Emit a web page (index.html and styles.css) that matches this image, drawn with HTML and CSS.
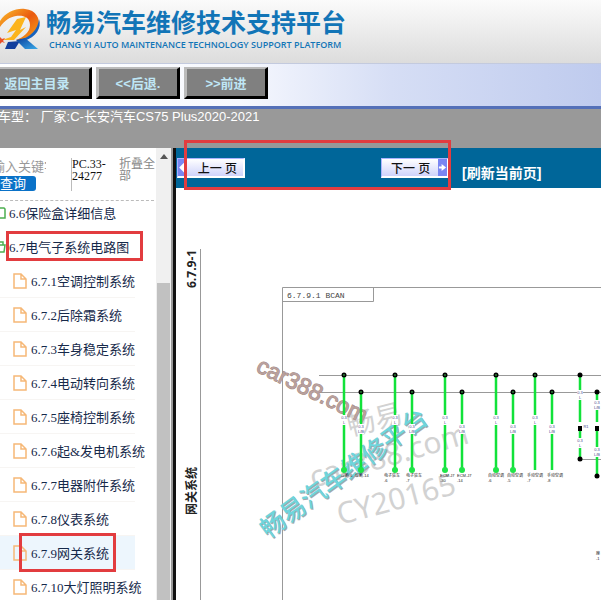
FILE: index.html
```html
<!DOCTYPE html>
<html lang="zh-CN">
<head>
<meta charset="utf-8">
<title>畅易汽车维修技术支持平台</title>
<link rel="stylesheet" href="styles.css">
</head>
<body>
<header class="brand">
  <svg class="logo" viewBox="0 0 42 52" aria-hidden="true">
    <defs>
      <linearGradient id="flame" x1="0" y1="0" x2="1" y2="1">
        <stop offset="0" stop-color="#fbc02a"/><stop offset=".5" stop-color="#ea5a10"/><stop offset="1" stop-color="#f7a81a"/>
      </linearGradient>
      <linearGradient id="leg" x1="0" y1="0" x2="1" y2="1">
        <stop offset="0" stop-color="#0b3f9c"/><stop offset="1" stop-color="#39a9e8"/>
      </linearGradient>
    </defs>
    <path d="M0 21C6 12 16 8 25 9c11 1 16 10 13 18-3 8-10 12-17 14l-5-1c8-3 14-8 14-15 0-8-7-10-14-9C10 17 5 20 0 27z" fill="url(#flame)"/>
    <path d="M39 19c3 9-3 18-15 22l-4-1c10-3 18-10 19-21z" fill="#1762bd"/>
    <path d="M17 19l9-2-6 13 6-3-12 13-12 0 9-3 5-7-9 3z" fill="#fcb41c"/>
    <path d="M8 42l12-1-5 8H5z" fill="#123f9d"/>
    <path d="M16 40l9-2 13 11H25z" fill="url(#leg)"/>
    <path d="M0 37l2 2 3-1-2 3 2 2-3-1-2 2z" fill="#e9502a"/>
  </svg>
  <div>
    <h1 class="brand-name">畅易汽车维修技术支持平台</h1>
    <p class="brand-sub">CHANG YI AUTO MAINTENANCE TECHNOLOGY SUPPORT PLATFORM</p>
  </div>
</header>
<nav class="toolbar">
  <button class="tool tool-home" type="button">返回主目录</button>
  <button class="tool" type="button">&lt;&lt;后退.</button>
  <button class="tool" type="button">&gt;&gt;前进</button>
</nav>
<div class="vehicle">车型： 厂家:C-长安汽车CS75 Plus2020-2021</div>
<div class="frames">
  <aside class="side">
    <div class="side-body">
      <form class="search">
        <div class="search-box">
          <input class="search-input" type="text" placeholder="输入关键字" aria-label="关键字">
          <button class="search-go" type="button">查询</button>
        </div>
        <span class="code">PC.33-24277</span>
        <a class="fold" href="#">折叠全部</a>
      </form>
      <ul class="tree">
        <li><a class="row chapter" href="#"><svg class="book" viewBox="0 0 6 12" aria-hidden="true"><path d="M0 1h4l1 1v9H0"/></svg>6.6保险盒详细信息</a></li>
        <li><a class="row chapter" href="#"><svg class="book" viewBox="0 0 6 12" aria-hidden="true"><path d="M0 1h3v3h2l-1 7H0M0 4h3"/></svg>6.7电气子系统电路图</a><span class="mark mark-chapter"></span></li>
        <li><a class="row" href="#"><svg class="page" viewBox="0 0 14 16" aria-hidden="true"><path d="M1 1h7l5 5v9H1zM8 1v5h5"/></svg>6.7.1空调控制系统</a></li>
        <li><a class="row" href="#"><svg class="page" viewBox="0 0 14 16" aria-hidden="true"><path d="M1 1h7l5 5v9H1zM8 1v5h5"/></svg>6.7.2后除霜系统</a></li>
        <li><a class="row" href="#"><svg class="page" viewBox="0 0 14 16" aria-hidden="true"><path d="M1 1h7l5 5v9H1zM8 1v5h5"/></svg>6.7.3车身稳定系统</a></li>
        <li><a class="row" href="#"><svg class="page" viewBox="0 0 14 16" aria-hidden="true"><path d="M1 1h7l5 5v9H1zM8 1v5h5"/></svg>6.7.4电动转向系统</a></li>
        <li><a class="row" href="#"><svg class="page" viewBox="0 0 14 16" aria-hidden="true"><path d="M1 1h7l5 5v9H1zM8 1v5h5"/></svg>6.7.5座椅控制系统</a></li>
        <li><a class="row" href="#"><svg class="page" viewBox="0 0 14 16" aria-hidden="true"><path d="M1 1h7l5 5v9H1zM8 1v5h5"/></svg>6.7.6起&amp;发电机系统</a></li>
        <li><a class="row" href="#"><svg class="page" viewBox="0 0 14 16" aria-hidden="true"><path d="M1 1h7l5 5v9H1zM8 1v5h5"/></svg>6.7.7电器附件系统</a></li>
        <li><a class="row" href="#"><svg class="page" viewBox="0 0 14 16" aria-hidden="true"><path d="M1 1h7l5 5v9H1zM8 1v5h5"/></svg>6.7.8仪表系统</a></li>
        <li><a class="row current" href="#"><svg class="page" viewBox="0 0 14 16" aria-hidden="true"><path d="M1 1h7l5 5v9H1zM8 1v5h5"/></svg>6.7.9网关系统</a><span class="mark mark-page"></span></li>
        <li><a class="row" href="#"><svg class="page" viewBox="0 0 14 16" aria-hidden="true"><path d="M1 1h7l5 5v9H1zM8 1v5h5"/></svg>6.7.10大灯照明系统</a></li>
      </ul>
    </div>
    <div class="scroll" aria-hidden="true"><i class="scroll-up"></i><i class="scroll-thumb"></i></div>
  </aside>
  <main class="view">
    <div class="pager">
      <button class="turn turn-prev" type="button"><svg class="arrow" viewBox="0 0 8 14" aria-hidden="true"><path d="M6 2v10L1 7z"/></svg><span>上一 页</span></button>
      <button class="turn turn-next" type="button"><span>下一 页</span><svg class="arrow" viewBox="0 0 10 14" aria-hidden="true"><path d="M1 6h3V3l5 4-5 4V8H1z"/></svg></button>
      <a class="refresh" href="#">[刷新当前页]</a>
      <span class="mark mark-pager"></span>
    </div>
    <svg class="sheet" viewBox="176 188 425 412" role="img" aria-label="6.7.9.1 BCAN">
      <defs>
        <g id="w1"><path class="wire" d="M0 375V470"/><circle cy="375" r="2.5"/><circle cy="375" r="1" class="eye"/><path class="gap" d="M-3 415h6v10h-6z"/></g>
        <g id="w2"><path class="wire" d="M0 392V470"/><circle cy="392" r="2.5"/><circle cy="392" r="1" class="eye"/><path class="gap" d="M-3 424h6v10h-6z"/></g>
      </defs>
      <path class="rule" d="M200.500 249V600M282.500 600V287.500H601M282.500 301.500H373.500V287.500"/>
      <text class="side-text" transform="translate(196 288) rotate(-90)">6.7.9-1</text>
      <text class="side-text" transform="translate(196 515) rotate(-90)">网关系统</text>
      <text class="frame-title" x="287" y="298">6.7.9.1 BCAN</text>
      <path class="rule" d="M319 375.500H601M319 392.500H601M580 459.500H601"/>
      <g class="grey">
        <text font-size="28" transform="translate(350 436) rotate(-14)">畅易</text>
        <text font-size="30" transform="translate(313 488) rotate(-16)">car388.com</text>
        <text font-size="30" transform="translate(340 525) rotate(-15)">CY20165</text>
      </g>
      <text class="brown" transform="translate(255 371) rotate(26)">car388.com</text>
      <text class="cyan shade" transform="translate(269 540) rotate(-36)">畅易汽车维修平台</text>
      <text class="cyan" transform="translate(268 539) rotate(-36)">畅易汽车维修平台</text>
      <use href="#w1" x="344"/><use href="#w1" x="395"/><use href="#w1" x="445"/><use href="#w1" x="496"/><use href="#w1" x="535"/>
      <use href="#w2" x="361"/><use href="#w2" x="412"/><use href="#w2" x="462"/><use href="#w2" x="513"/><use href="#w2" x="552"/>
      <g class="plug"><circle cx="344" cy="470" r="3"/><circle cx="361" cy="470" r="3"/><circle cx="395" cy="470" r="3"/><circle cx="412" cy="470" r="3"/><circle cx="445" cy="470" r="3"/><circle cx="462" cy="470" r="3"/><circle cx="496" cy="470" r="3"/><circle cx="513" cy="470" r="3"/></g>
      <path class="wire" d="M580 375V459M597 392V476"/>
      <circle cx="580" cy="375" r="2.500"/><circle cx="597" cy="392" r="2.500"/><circle cx="580" cy="459" r="2.500"/><circle cx="597" cy="476" r="2.500"/>
      <path class="gap" d="M577 390h6v10h-6zM577 438h6v10h-6zM594 400h6v10h-6zM594 447h6v10h-6zM577 422h6v4h-6zM594 422h6v4h-6z"/>
      <path d="M578 426h4v5h-4zM595 426h4v5h-4z"/>
      <g class="tag">
        <text x="344" y="419">0.3</text><text x="344" y="424">L</text><text x="361" y="428">0.3</text><text x="361" y="433">L/B</text>
        <text x="395" y="419">0.3</text><text x="395" y="424">L</text><text x="412" y="428">0.3</text><text x="412" y="433">L/B</text>
        <text x="445" y="419">0.3</text><text x="445" y="424">L</text><text x="462" y="428">0.3</text><text x="462" y="433">L/B</text>
        <text x="496" y="419">0.3</text><text x="496" y="424">L</text><text x="513" y="428">0.3</text><text x="513" y="433">L/B</text>
        <text x="535" y="419">0.3</text><text x="535" y="424">L</text><text x="552" y="428">0.3</text><text x="552" y="433">L/B</text>
        <text x="580" y="394">0.3</text><text x="580" y="399">L</text><text x="597" y="404">0.3</text><text x="597" y="409">L/B</text>
        <text x="580" y="442">0.3</text><text x="580" y="447">L</text><text x="597" y="451">0.3</text><text x="597" y="456">L/B</text>
        <text x="586" y="428">R1</text>
      </g>
      <g class="pin">
        <text x="341" y="477">诊断-6</text><text x="355" y="477">诊断-14</text>
        <text x="384" y="477">电子驻车</text><text x="384" y="482">-6</text><text x="406" y="477">电子驻车</text><text x="406" y="482">-7</text>
        <text x="440" y="477">ECM-J7</text><text x="440" y="482">-30</text><text x="457" y="477">ECM-J7</text><text x="457" y="482">-14</text>
        <text x="488" y="477">自动空调</text><text x="488" y="482">-6</text><text x="507" y="477">自动空调</text><text x="507" y="482">-5</text>
        <text x="527" y="477">手动空调</text><text x="527" y="482">-7</text><text x="547" y="477">手动空调</text><text x="547" y="482">-8</text>
        <text x="596" y="555">座</text><text x="596" y="560">-1</text>
      </g>
    </svg>
  </main>
</div>
</body>
</html>
```
FILE: styles.css
```css
* {
  box-sizing: border-box;
}

body {
  margin: 0;
  height: 100vh;
  display: flex;
  flex-direction: column;
  overflow: hidden;
  background: #fff;
  font-family: "Liberation Sans", "Noto Sans CJK SC", sans-serif;
}

a {
  text-decoration: none;
}

button {
  margin: 0;
  padding: 0;
  font-family: inherit;
}

.brand {
  display: flex;
  flex: none;
  gap: 4px;
  height: 63px;
  background: linear-gradient(#fbfbfb, #dcdcdc);
}

.logo {
  width: 42px;
  height: 52px;
}

.brand-name {
  margin: 8px 0 0;
  font-size: 25px;
  line-height: 30px;
  font-weight: 700;
  color: #1275b7;
  white-space: nowrap;
}

.brand-sub {
  margin: 0 0 0 3px;
  font: 600 9px/14px "Open Sans", sans-serif;
  color: #1275b7;
  white-space: nowrap;
}

.toolbar {
  display: flex;
  flex: none;
  gap: 4px;
  height: 46px;
  padding-top: 3px;
  border-top: 1px solid #c3cade;
  border-bottom: 3px solid #5470b8;
  background: linear-gradient(90deg, #fff 0, #f6f8fe 40%, #d6def5 65%, #bfcbee 100%);
}

.tool {
  width: 84px;
  height: 32px;
  border: 3px solid #000;
  border-top: 2px solid #bbb;
  border-left-color: #bbb;
  background: #808080;
  color: #bfe6f5;
  font-size: 13px;
  font-weight: 700;
}

.tool-home {
  width: 96px;
  margin-left: -4px;
  padding-right: 14px;
  white-space: nowrap;
}

.vehicle {
  flex: none;
  height: 39px;
  background: #999;
  color: #fff;
  font-size: 13px;
  line-height: 16px;
  text-indent: -2px;
  white-space: pre;
}

.frames {
  display: flex;
  flex: 1;
  min-height: 0;
}

.side {
  display: flex;
  flex: none;
  width: 176px;
  border-right: 3px solid #111;
  box-shadow: inset -3px 0 #999;
}

.side-body {
  width: 156px;
  overflow: hidden;
  font-family: "Liberation Serif", "Noto Sans CJK SC", serif;
}

.search {
  display: flex;
  height: 53px;
  margin-right: 2px;
  padding-top: 10px;
  border-bottom: 1px dashed #bbb;
  font-size: 12px;
  line-height: 12px;
}

.search-box {
  display: flex;
  flex: none;
  flex-direction: column;
  align-items: flex-start;
  width: 71px;
}

.search-input {
  width: 54px;
  height: 18px;
  margin-left: -8px;
  padding: 0;
  border: 0;
  background: transparent;
  font: 13px/18px "Liberation Serif", "Noto Sans CJK SC", serif;
}

.search-input::placeholder {
  color: #999;
}

.search-go {
  width: 42px;
  height: 15px;
  margin-left: -6px;
  padding-right: 4px;
  border: 0;
  border-radius: 3px;
  background: #0a72c8;
  color: #fff;
  font-size: 13px;
  line-height: 15px;
}

.code {
  flex: none;
  width: 40px;
  height: 33px;
  border-left: 1px solid #bbb;
  color: #111;
}

.fold {
  flex: none;
  width: 45px;
  padding-left: 8px;
  color: #888;
  word-break: break-all;
}

.tree {
  margin: -5px 0 0;
  padding: 0;
  list-style: none;
}

.tree li {
  position: relative;
}

.row {
  display: flex;
  align-items: center;
  gap: 4px;
  width: 135px;
  height: 34px;
  padding-left: 13px;
  border-bottom: 1px solid #f7f5f3;
  color: #16294a;
  font-size: 13px;
  white-space: nowrap;
}

.chapter {
  gap: 3px;
  padding-left: 0;
  border-bottom-color: transparent;
}

.current {
  background: #edf6fd;
}

.page {
  flex: none;
  width: 14px;
  height: 16px;
  fill: none;
  stroke: #f6b877;
  stroke-width: 1.5;
}

.book {
  flex: none;
  width: 6px;
  height: 12px;
  fill: none;
  stroke: #4caf50;
  stroke-width: 1.5;
}

.mark {
  position: absolute;
  border: 3px solid #e23c3f;
  pointer-events: none;
}

.mark-chapter {
  left: 6px;
  top: 1px;
  width: 137px;
  height: 30px;
}

.mark-page {
  left: 19px;
  top: -3px;
  width: 97px;
  height: 39px;
}

.scroll {
  display: flex;
  flex-direction: column;
  align-items: center;
  width: 15px;
  padding-top: 6px;
  background: #f0f0f0;
}

.scroll-up {
  border: 4px solid transparent;
  border-top: 0;
  border-bottom: 5px solid #555;
}

.scroll-thumb {
  flex: 1;
  width: 13px;
  margin-top: 124px;
  background: #c1c1c1;
}

.view {
  flex: 1;
  min-width: 0;
}

.pager {
  position: relative;
  display: flex;
  align-items: center;
  height: 40px;
  padding-left: 1px;
  background: #069;
}

.turn {
  display: flex;
  align-items: center;
  justify-content: space-between;
  width: 68px;
  height: 20px;
  border: 1px solid #aab4ff;
  border-right: 2px solid #fff;
  border-bottom: 2px solid #fff;
  background: linear-gradient(#fff, #cfd3fb);
  color: #111;
  font-size: 12px;
  font-weight: 500;
  white-space: nowrap;
}

.turn-prev {
  padding-right: 6px;
}

.turn-next {
  margin-left: 136px;
  padding-left: 9px;
}

.arrow {
  width: 9px;
  height: 17px;
  background: #7a86f2;
  fill: #fff;
}

.refresh {
  margin: 10px 0 0 13px;
  color: #fff;
  font-size: 14px;
  line-height: 16px;
  font-weight: 700;
  white-space: nowrap;
}

.mark-pager {
  left: 8px;
  top: -8px;
  width: 267px;
  height: 50px;
}

.sheet {
  display: block;
  width: 425px;
  height: 412px;
}

.rule {
  fill: none;
  stroke: #999;
}

.wire {
  fill: none;
  stroke: #12e23a;
  stroke-width: 2.5;
}

.gap {
  fill: #fff;
}

.eye {
  fill: #287a35;
}

.plug {
  fill: #1fe548;
}

.side-text {
  font: 700 12px "Open Sans", "Noto Sans CJK SC", sans-serif;
  fill: #222;
}

.frame-title {
  font: 8px "Liberation Mono", monospace;
  fill: #444;
}

.grey {
  font-family: "Noto Sans", "Noto Sans CJK SC", sans-serif;
  fill: #d2d2d2;
}

.brown {
  font: 23px "Liberation Sans", sans-serif;
  fill: #b8a09e;
  stroke: #a58a80;
  stroke-width: 1;
  paint-order: stroke;
}

.cyan {
  font: 500 25px "Noto Sans CJK SC", sans-serif;
  fill: #6fd5dc;
}

.shade {
  fill: #a3a8ad;
}

.tag {
  font: 4px "Liberation Sans", sans-serif;
  text-anchor: middle;
  fill: #4a4a90;
}

.pin {
  font: 4px "Liberation Sans", "Noto Sans CJK SC", sans-serif;
  fill: #222;
}
```
